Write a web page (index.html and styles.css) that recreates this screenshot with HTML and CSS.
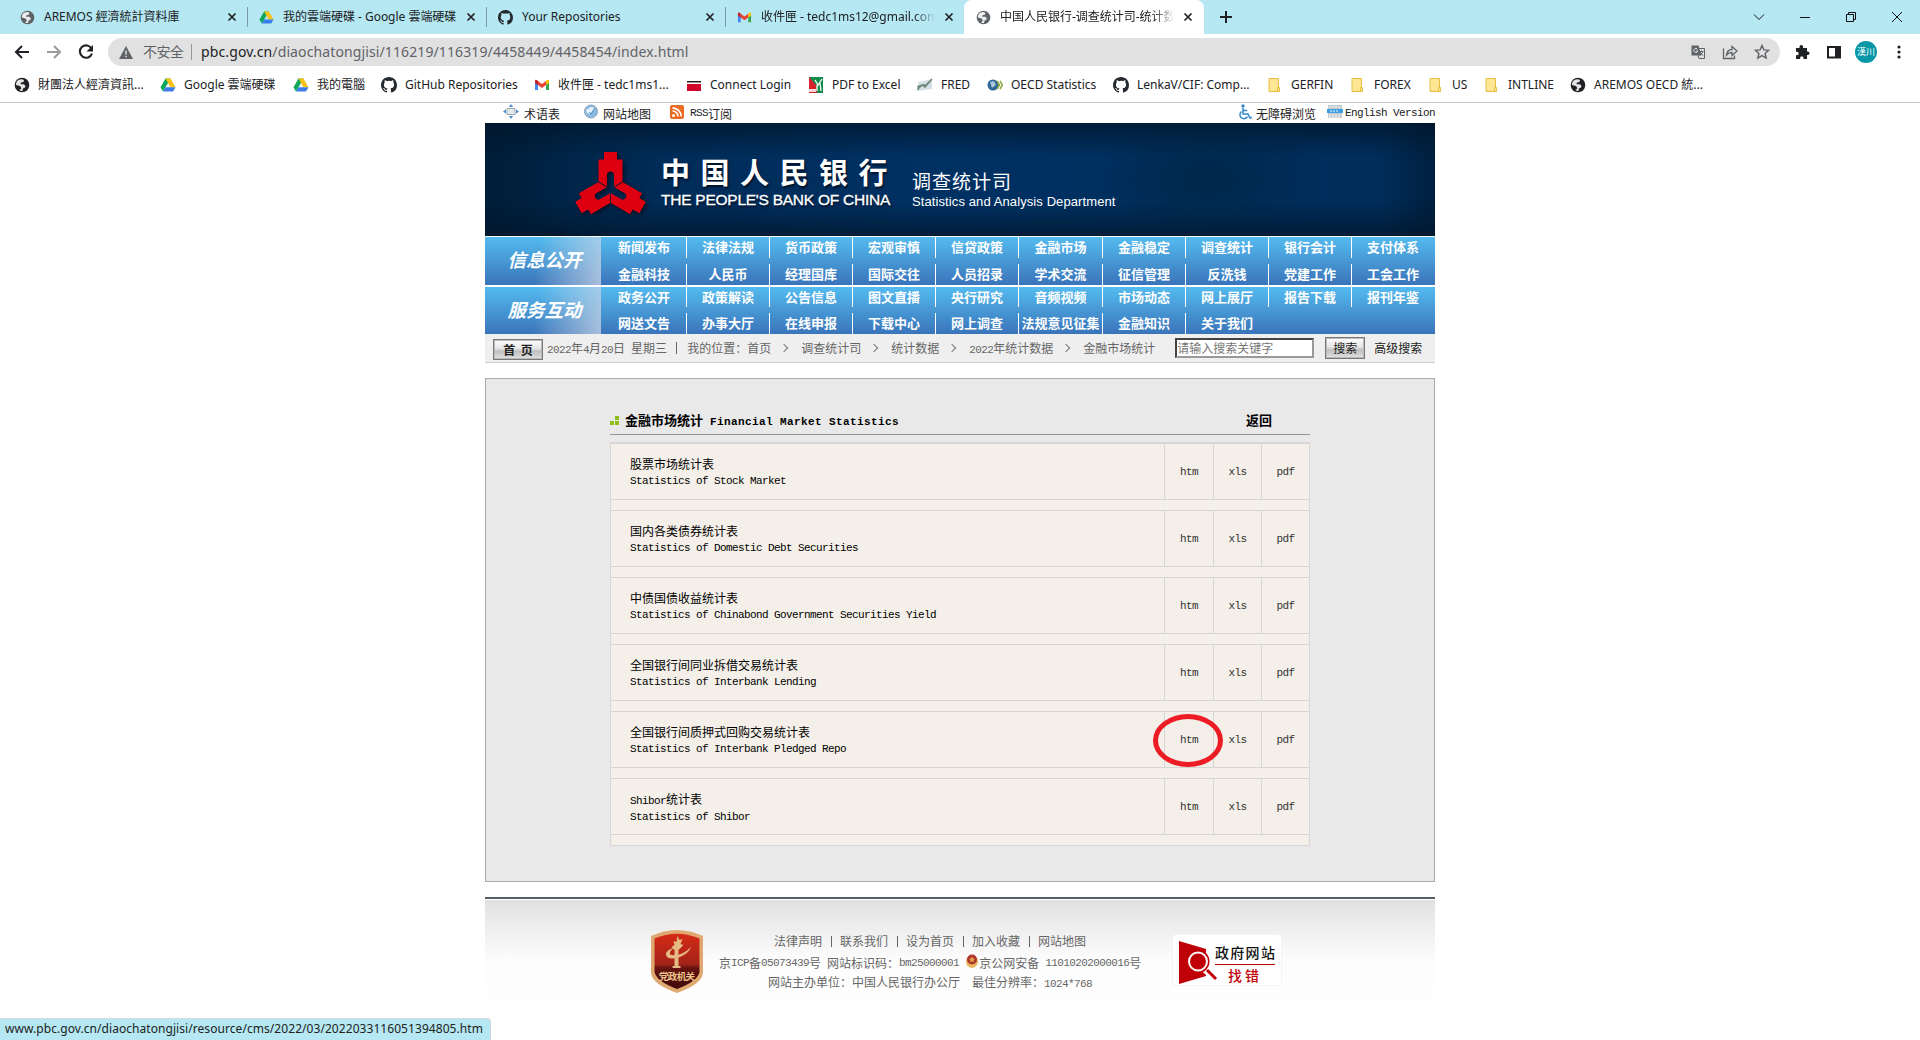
FILE: index.html
```html
<!DOCTYPE html>
<html lang="zh-CN">
<head>
<meta charset="utf-8">
<title>中国人民银行-调查统计司-统计数据</title>
<link rel="stylesheet" href="styles.css">
</head>
<body>
<svg class="defs" aria-hidden="true">
  <defs>
    <symbol id="globe" viewBox="0 0 16 16"><circle cx="8" cy="8" r="7.3" fill="currentColor"/><path d="M3 4.200C4 2.800 6 2 8 2.200L10 3 9.500 5 7 5.500 6.500 7.200H10L11.500 9 11 10.500 9 11.500 8.500 13.900C7.500 14.100 6.500 14 5.500 13L7.500 11.200 6 9 2 8C1.900 6.500 2.400 5.200 3 4.200Z" fill="#fff" opacity=".88"/></symbol>
    <symbol id="drive" viewBox="0 0 16 16"><path d="M5.500 1.500h5L8 5.900 3 14.500.5 10.200Z" fill="#0fa85a"/><path d="M5.500 1.500h5l5 8.700H10.400Z" fill="#fbc116"/><path d="M5.500 10.200h10L13 14.500H3Z" fill="#3b7ded"/></symbol>
    <symbol id="github" viewBox="0 0 16 16"><path fill="#24292f" d="M8 0C3.580 0 0 3.580 0 8c0 3.540 2.290 6.530 5.470 7.590.4.070.55-.17.55-.38 0-.19-.01-.82-.01-1.490-2.010.37-2.530-.49-2.690-.94-.09-.23-.48-.94-.82-1.130-.28-.15-.68-.52-.01-.53.63-.01 1.080.58 1.230.82.72 1.210 1.870.87 2.330.66.07-.52.28-.87.51-1.070-1.780-.2-3.640-.89-3.640-3.950 0-.87.31-1.590.82-2.150-.08-.2-.36-1.020.08-2.120 0 0 .67-.21 2.200.82A7.600 7.600 0 018 3.860c.68 0 1.360.09 2 .27 1.530-1.040 2.200-.82 2.200-.82.44 1.100.16 1.920.08 2.120.51.56.82 1.270.82 2.150 0 3.070-1.870 3.750-3.650 3.950.29.25.54.73.54 1.480 0 1.070-.01 1.930-.01 2.200 0 .21.15.46.55.38A8 8 0 0016 8c0-4.420-3.580-8-8-8z"/></symbol>
    <symbol id="gmail" viewBox="0 0 16 16"><path d="M1 5v8h3V7Z" fill="#4285f4"/><path d="M12 7v6h3V5Z" fill="#34a853"/><path d="M4 4l4 3 4-3v4l-4 3-4-3Z" fill="#ea4335"/><path d="M1 4c0-1.500 1.500-1.800 3 0v4L1 6Z" fill="#c5221f"/><path d="M15 4c0-1.500-1.500-1.800-3 0v4l3-2Z" fill="#fbbc04"/></symbol>
    <symbol id="folder" viewBox="0 0 16 16"><path d="M2 1.500h9.500v9h1v4H2Z" fill="#ffe694" stroke="#e6bd42"/><path d="M10.500 14v-3.500H12" fill="none" stroke="#e6bd42"/></symbol>
    <symbol id="close" viewBox="0 0 10 10"><path d="M1.500 1.500l7 7M8.500 1.500l-7 7" stroke="#202124" stroke-width="1.700"/></symbol>
  </defs>
</svg>

<header class="browser">
  <div class="tabs">
    <div class="tab"><svg class="fav grey"><use href="#globe"/></svg><span>AREMOS 經濟統計資料庫</span><svg class="x"><use href="#close"/></svg></div>
    <div class="tab"><svg class="fav"><use href="#drive"/></svg><span>我的雲端硬碟 - Google 雲端硬碟</span><svg class="x"><use href="#close"/></svg></div>
    <div class="tab"><svg class="fav"><use href="#github"/></svg><span>Your Repositories</span><svg class="x"><use href="#close"/></svg></div>
    <div class="tab last"><svg class="fav"><use href="#gmail"/></svg><span class="fade">收件匣 - tedc1ms12@gmail.com</span><svg class="x"><use href="#close"/></svg></div>
    <div class="tab active"><svg class="fav grey"><use href="#globe"/></svg><span class="fade sc">中国人民银行-调查统计司-统计数</span><svg class="x"><use href="#close"/></svg></div>
    <svg class="plus" viewBox="0 0 12 12"><path d="M6 0v12M0 6h12" stroke="#202124" stroke-width="2"/></svg>
    <div class="win">
      <svg viewBox="0 0 12 12"><path d="M1 3.500l5 5 5-5" /></svg>
      <svg viewBox="0 0 12 12"><path d="M1 6.500h10"/></svg>
      <svg viewBox="0 0 12 12"><path d="M1.500 3.500h7v7h-7zM3.500 3.500v-2h7v7h-2"/></svg>
      <svg viewBox="0 0 12 12"><path d="M1 1l10 10M11 1L1 11"/></svg>
    </div>
  </div>
  <div class="toolbar">
    <svg class="nav-i" viewBox="0 0 16 16"><path d="M15 8H2M8 2L2 8l6 6" fill="none" stroke="#202124" stroke-width="2"/></svg>
    <svg class="nav-i" viewBox="0 0 16 16"><path d="M1 8h13M8 2l6 6-6 6" fill="none" stroke="#9a9b9d" stroke-width="2"/></svg>
    <svg class="nav-i" viewBox="0 0 16 16"><path d="M13.500 4.500A6.200 6.200 0 1 0 14 9.500" fill="none" stroke="#202124" stroke-width="2.100"/><path d="M15 1v6.500H8.500Z" fill="#202124"/></svg>
    <div class="omni">
      <svg class="warn" viewBox="0 0 14 13"><path d="M7 0l7 13H0Z" fill="#5f6368"/><path d="M7 4.500v4M7 9.800v1.500" stroke="#e1e1e1" stroke-width="1.500"/></svg>
      <span class="unsafe">不安全</span>
      <span class="url"><b>pbc.gov.cn</b>/diaochatongjisi/116219/116319/4458449/4458454/index.html</span>
      <svg viewBox="0 0 16 16"><path d="M1.500 1.500h7l3 10h-10z" fill="#5f6368"/><path d="M8 4.500h6.500v10H9l-1-3" fill="none" stroke="#5f6368"/><path d="M9.500 7.500h4M11.500 6.500v1M10 11.500l3-4M10.500 8.500l2.500 3" stroke="#5f6368"/><path d="M7.500 5.300A2 2 0 1 0 7.800 7H6" fill="none" stroke="#e1e1e1"/></svg>
      <svg viewBox="0 0 16 16"><path d="M1.500 4.500v10h11v-3M4.500 11c.5-4 3-5.500 5.500-5.500V2.500l5 4.500-5 4.500v-3c-2.500 0-4 .5-5.500 2.500z" fill="none" stroke="#5f6368" stroke-width="1.300"/></svg>
      <svg viewBox="0 0 16 16"><path d="M8 1.500l1.900 4.400 4.800.4-3.600 3.100 1.100 4.700L8 11.600l-4.200 2.500 1.100-4.700L1.300 6.300l4.800-.4Z" fill="none" stroke="#5f6368" stroke-width="1.400"/></svg>
    </div>
    <div class="ext">
      <svg viewBox="0 0 16 16"><path d="M2 4h3.500V2.800a1.800 1.800 0 0 1 3.600 0V4H13v3.500h.8a1.800 1.800 0 0 1 0 3.600H13V15H9.500v-1a1.700 1.700 0 0 0-3.400 0v1H2v-3.800h1a1.700 1.700 0 0 0 0-3.400H2Z" fill="#202124"/></svg>
      <svg viewBox="0 0 16 16"><path d="M2 3h12v10.500H2z" fill="none" stroke="#202124" stroke-width="2"/><path d="M9 2h5v12H9z" fill="#202124"/></svg>
      <span class="avatar">漢川</span>
      <svg viewBox="0 0 16 16" fill="#202124"><circle cx="8" cy="3" r="1.600"/><circle cx="8" cy="8" r="1.600"/><circle cx="8" cy="13" r="1.600"/></svg>
    </div>
  </div>
  <nav class="marks">
    <a><svg class="dark"><use href="#globe"/></svg>財團法人經濟資訊...</a>
    <a><svg><use href="#drive"/></svg>Google 雲端硬碟</a>
    <a><svg><use href="#drive"/></svg>我的電腦</a>
    <a><svg><use href="#github"/></svg>GitHub Repositories</a>
    <a><svg><use href="#gmail"/></svg>收件匣 - tedc1ms1...</a>
    <a><svg viewBox="0 0 16 16"><path d="M1 4h14v1.500H1z" fill="#222"/><path d="M1 7h14v7H1z" fill="#d0062b"/></svg>Connect Login</a>
    <a><svg viewBox="0 0 16 16"><path d="M1 0h14v16H1z" fill="#128c4a"/><path d="M1 0l7 8 1 8H1z" fill="#d9222b"/><path d="M7 3l3 5 4-6M9 8v6M12 6l1 8" stroke="#fff" stroke-width="1.300" fill="none"/><path d="M1 12h7v3H1z" fill="#f4dada"/></svg>PDF to Excel</a>
    <a><svg viewBox="0 0 16 16"><path d="M1 5l14-3v10L1 14z" fill="#d6dfe5"/><path d="M0 13l5-5 3 2 7-8M0 10l5-2 4 0 5-5" stroke="#6c8774" stroke-width="1.500" fill="none"/></svg>FRED</a>
    <a><svg viewBox="0 0 16 16"><circle cx="6" cy="8" r="5.500" fill="#2d6693"/><path d="M3 5l4-1 2 4-4 3z" fill="#abc8dc"/><path d="M10 4l2.500 4L10 12M13 4l2.500 4L13 12" stroke="#8ba83d" stroke-width="1.500" fill="none"/></svg>OECD Statistics</a>
    <a><svg><use href="#github"/></svg>LenkaV/CIF: Comp...</a>
    <a><svg><use href="#folder"/></svg>GERFIN</a>
    <a><svg><use href="#folder"/></svg>FOREX</a>
    <a><svg><use href="#folder"/></svg>US</a>
    <a><svg><use href="#folder"/></svg>INTLINE</a>
    <a><svg class="dark"><use href="#globe"/></svg>AREMOS OECD 統...</a>
  </nav>
</header>

<main class="page">
  <div class="toplinks">
    <a><svg viewBox="0 0 16 16"><path d="M4 4.500h8v6H4z" fill="#e3e8ec" stroke="#9aa8b2"/><path d="M8 0l2.200 3H5.800zM8 15l2.200-3H5.800zM0 7.500l3-2.200v4.400zM16 7.500l-3-2.200v4.400z" fill="#5590cc"/></svg>术语表</a>
    <a><svg viewBox="0 0 16 16"><circle cx="8" cy="7.500" r="6.500" fill="#8abbe4" stroke="#8fa3b5"/><path d="M3 6l5-3 4 1-5 6-3-1z" fill="#e4f1fb"/><path d="M6 8l2 2 4-6" stroke="#568dbf" fill="none"/></svg>网站地图</a>
    <a><svg viewBox="0 0 16 16"><rect x="1" y="1" width="14" height="14" rx="2" fill="#ec6b20"/><circle cx="4.500" cy="11.500" r="1.500" fill="#fff"/><path d="M3.500 7a5.500 5.500 0 0 1 5.500 5.500M3.500 3.800a9 9 0 0 1 8.700 8.700" stroke="#fff" stroke-width="1.700" fill="none"/></svg><i>RSS</i>订阅</a>
    <a class="right"><svg viewBox="0 0 16 16"><circle cx="6" cy="2" r="1.700" fill="#3287c8"/><path d="M6 4v6h5l2 4 2-.6M6 6.500h4M4.500 7.500a4 4 0 1 0 6 5" stroke="#3287c8" stroke-width="1.500" fill="none"/></svg>无障碍浏览</a>
    <a><svg viewBox="0 0 16 16"><path d="M1 1h14v13H1z" fill="#c6cbcf"/><path d="M0 5h16v4H0z" fill="#3c9ee2"/><path d="M2 3h12M2 11h12M2 13h12M3 7h9" stroke="#f4f7fa" stroke-dasharray="2 1"/></svg><i>English Version</i></a>
  </div>

  <div class="banner">
    <svg class="logo" viewBox="0 0 71 63"><defs><path id="arm" d="M23.500 30.600V8.500H29V1H42V8.500H47.500V30.600L39 35.600V24a3.500 3.500 0 0 0-7 0V35.600Z"/></defs><g fill="#de0011"><use href="#arm"/><use href="#arm" transform="rotate(120 35.500 38)"/><use href="#arm" transform="rotate(240 35.500 38)"/></g></svg>
    <div class="name"><strong>中国人民银行</strong><span>THE PEOPLE'S BANK OF CHINA</span></div>
    <div class="dept"><strong>调查统计司</strong><span>Statistics and Analysis Department</span></div>
  </div>

  <nav class="menu">
    <h2>信息公开</h2>
    <div class="cells">
      <a>新闻发布</a><a>法律法规</a><a>货币政策</a><a>宏观审慎</a><a>信贷政策</a><a>金融市场</a><a>金融稳定</a><a>调查统计</a><a>银行会计</a><a>支付体系</a>
      <a>金融科技</a><a>人民币</a><a>经理国库</a><a>国际交往</a><a>人员招录</a><a>学术交流</a><a>征信管理</a><a>反洗钱</a><a>党建工作</a><a>工会工作</a>
    </div>
  </nav>
  <nav class="menu second">
    <h2>服务互动</h2>
    <div class="cells">
      <a>政务公开</a><a>政策解读</a><a>公告信息</a><a>图文直播</a><a>央行研究</a><a>音频视频</a><a>市场动态</a><a>网上展厅</a><a>报告下载</a><a>报刊年鉴</a>
      <a>网送文告</a><a>办事大厅</a><a>在线申报</a><a>下载中心</a><a>网上调查</a><a>法规意见征集</a><a>金融知识</a><a class="end">关于我们</a>
    </div>
  </nav>

  <div class="crumbs">
    <span class="btn home">首 页</span>
    <span class="date"><i>2022</i>年<i>4</i>月<i>20</i>日<i> </i>星期三</span><span class="bar"></span><span>我的位置：首页</span>
    <span class="gt"></span><span>调查统计司</span><span class="gt"></span><span>统计数据</span><span class="gt"></span><span><i>2022</i>年统计数据</span><span class="gt"></span><span>金融市场统计</span>
    <span class="field">请输入搜索关键字</span><span class="btn search">搜索</span><span class="adv">高级搜索</span>
  </div>

  <section class="panel">
    <div class="head"><svg viewBox="0 0 9 9"><path d="M5 0h4v4H5zM0 5h4v4H0zM5 5h4v4H5z" fill="#8fbe1b"/></svg><h1>金融市场统计<i> Financial Market Statistics</i></h1><a>返回</a></div>
    <div class="table">
      <div class="row"><p>股票市场统计表<br><i>Statistics of Stock Market</i></p><a>htm</a><a>xls</a><a>pdf</a></div>
      <div class="row"><p>国内各类债券统计表<br><i>Statistics of Domestic Debt Securities</i></p><a>htm</a><a>xls</a><a>pdf</a></div>
      <div class="row"><p>中债国债收益统计表<br><i>Statistics of Chinabond Government Securities Yield</i></p><a>htm</a><a>xls</a><a>pdf</a></div>
      <div class="row"><p>全国银行间同业拆借交易统计表<br><i>Statistics of Interbank Lending</i></p><a>htm</a><a>xls</a><a>pdf</a></div>
      <div class="row"><p>全国银行间质押式回购交易统计表<br><i>Statistics of Interbank Pledged Repo</i></p><a class="ringed">htm</a><a>xls</a><a>pdf</a></div>
      <div class="row"><p><i>Shibor</i>统计表<br><i>Statistics of Shibor</i></p><a>htm</a><a>xls</a><a>pdf</a></div>
    </div>
  </section>

  <footer class="foot">
    <svg class="emblem" viewBox="0 0 52 63">
      <defs><linearGradient id="red" x2="0" y2="1"><stop offset="0" stop-color="#d62a17"/><stop offset=".55" stop-color="#a32318"/><stop offset=".62" stop-color="#65130f"/><stop offset="1" stop-color="#3d0a08"/></linearGradient></defs>
      <path d="M0 6Q26-6 52 6V43Q51 54 26 63 1 54 0 43Z" fill="#dfa971"/>
      <path d="M3.500 8.500Q26-1 48.500 8.500V42Q47 51 26 59 5 51 3.500 42Z" fill="url(#red)"/>
      <path d="M23.500 36V20l-3-3 3-2-1-4 3 1 1-6 2 4 3-1-2 5 3 1-5 5v16h2v2h-8v-2Z" fill="#e6ba83"/><path d="M25 17q-11 3-10 8 2 6 14 2 9-4 11-10-6 6-13 8-9 1-8-2 0-3 6-6Z" fill="#e6ba83"/>
      <text x="26" y="49.500" text-anchor="middle" textLength="36">党政机关</text>
    </svg>
    <div class="info">
      <div class="links"><a>法律声明</a><a>联系我们</a><a>设为首页</a><a>加入收藏</a><a>网站地图</a></div>
      <div class="icp">京<i>ICP</i>备<i>05073439</i>号<i> </i>网站标识码：<i>bm25000001 </i><svg viewBox="0 0 12 14"><ellipse cx="6" cy="7.500" rx="6" ry="6.500" fill="#e8b860"/><circle cx="6" cy="5.500" r="5" fill="#ad352c"/><path d="M6 2.500l1 2 2 .3-1.500 1.500.3 2L6 7.300l-1.800 1 .3-2L3 4.800l2-.3z" fill="#e7a94e"/></svg>京公网安备<i> 11010202000016</i>号</div>
      <div class="host">网站主办单位：中国人民银行办公厅<i>&nbsp; </i>最佳分辨率：<i>1024*768</i></div>
    </div>
    <div class="report">
      <svg viewBox="0 0 40 44"><path d="M0 0l27 8v27L0 43Z" fill="#bf0006"/><path d="M25 27l5 5" stroke="#fff" stroke-width="7"/><circle cx="19" cy="20.500" r="11.500" fill="#bf0006"/><circle cx="19" cy="20.500" r="9" fill="none" stroke="#fff" stroke-width="2"/><path d="M28 29l9 9" stroke="#bf0006" stroke-width="3"/></svg>
      <div><b>政府网站</b><em>找错</em></div>
    </div>
  </footer>
</main>
<div class="status">www.pbc.gov.cn/diaochatongjisi/resource/cms/2022/03/2022033116051394805.htm</div>
</body>
</html>
```

FILE: styles.css
```css
*, *::before, *::after { box-sizing: border-box; }
body { margin: 0; height: 1040px; overflow: hidden; background: #fff; font: 12px/16px "Noto Sans CJK SC", sans-serif; color: #000; }
.defs { position: absolute; width: 0; height: 0; }
svg { flex: none; display: block; }
a, span { white-space: nowrap; }
i { font-family: "Liberation Mono", monospace; font-size: 11px; letter-spacing: -.6px; line-height: 1; font-style: normal; white-space: pre; }

/* browser window */
.browser { height: 103px; border-bottom: 1px solid #c9c9c9; font-family: "Noto Sans", "Noto Sans CJK TC", sans-serif; color: #202124; }
.tabs { display: flex; height: 34px; background: #b5e8f2; padding-left: 8px; align-items: center; }
.tab { position: relative; display: flex; align-items: center; width: 239px; height: 34px; padding-left: 12px; letter-spacing: -.02px; }
.tab:not(.last):not(.active)::after { content: ""; position: absolute; right: -1px; top: 7px; height: 20px; width: 1px; background: #799ba2; }
.tab .fav { width: 15px; height: 15px; margin-right: 9px; }
.tab span { width: 179px; overflow: hidden; }
.tab .x { width: 10px; height: 10px; margin-left: 4px; }
.grey { color: #5f6368; }
.dark { color: #202124; }
.tab .fade { width: 174px; margin-right: 5px; -webkit-mask-image: linear-gradient(90deg, #000 88%, transparent); mask-image: linear-gradient(90deg, #000 88%, transparent); }
.sc { font-family: "Noto Sans", "Noto Sans CJK SC", sans-serif; }
.tab.active { width: 240px; background: #fff; border-radius: 8px 8px 0 0; }
.plus { width: 12px; height: 12px; margin-left: 16px; }
.win { margin-left: auto; display: flex; gap: 34px; padding-right: 17px; height: 28px; align-items: center; }
.win svg { width: 12px; height: 12px; fill: none; stroke: #111; }
.toolbar { display: flex; align-items: center; height: 36px; padding-left: 14px; }
.nav-i { width: 16px; height: 16px; margin-right: 16px; }
.nav-i:nth-child(3) { margin-right: 14px; }
.omni { display: flex; align-items: center; height: 28px; width: 1672px; border-radius: 14px; background: #e1e1e1; padding: 0 10px 0 11px; color: #5f6368; }
.warn { width: 14px; height: 13px; margin-right: 10px; }
.unsafe { font-size: 14px; letter-spacing: -.6px; width: 49px; border-right: 1px solid #999; line-height: 16px; margin-right: 9px; }
.url { font-size: 14px; letter-spacing: .115px; flex: 1; }
.url b { color: #202124; font-weight: 400; }
.omni > svg:not(.warn) { width: 16px; height: 16px; margin-left: 16px; }
.ext { display: flex; align-items: center; margin-left: 14px; gap: 16px; }
.ext svg { width: 16px; height: 16px; }
.ext .avatar { width: 22px; height: 22px; margin: 0 -2px 0 -3px; border-radius: 50%; background: #0797a7; color: #fff; font-size: 9px; line-height: 22px; text-align: center; }
.marks { display: grid; grid-template-columns: 146px 133px 88px 153px 152px 122px 109px 70px 126px 154px 83px 78px 56px 86px 150px; padding-left: 14px; height: 29px; align-items: center; }
.marks a { display: flex; align-items: center; gap: 8px; }

/* site */
.page { width: 950px; margin: 0 auto; }
.toplinks { display: flex; height: 20px; padding-left: 18px; padding-top: 1px; color: #222; line-height: 22px; }
.toplinks a { display: flex; align-items: center; gap: 5px; margin-right: 22px; }
.toplinks a:nth-child(2) { margin-right: 18px; margin-left: 1px; gap: 4px; }
.toplinks a > i { margin-right: -5px; }
.marks svg, .toplinks svg { width: 16px; height: 16px; }
.toplinks svg { margin-top: -4px; }
.toplinks .right { margin-left: auto; margin-right: 11px; gap: 3px; }
.toplinks a:last-child { margin-right: 0; gap: 2px; }
.toplinks a:last-child i { margin-right: 0; }
.banner { height: 113px; display: flex; color: #fff; padding-left: 90px; padding-top: 28px; background: radial-gradient(ellipse 12% 60% at 76% 50%, rgba(0, 34, 60, .6), transparent), radial-gradient(ellipse 8% 55% at 12% 50%, rgba(0, 38, 75, .5), transparent), linear-gradient(180deg, rgba(0, 22, 43, .75), transparent 30%, transparent 70%, rgba(0, 22, 43, .75)), linear-gradient(90deg, #001d37, #002c58 18%, #003163 48%, #002d5a 94%, #001f3e); font-family: "Liberation Sans", "Noto Sans CJK SC", sans-serif; }
.logo { width: 71px; height: 63px; filter: drop-shadow(2px 2px 2px #001126); }
.name, .dept { display: flex; flex-direction: column; }
.name { width: 251px; margin-left: 15px; text-shadow: 1px 2px 2px #001126; }
.name strong { font-size: 29px; line-height: 34px; margin-top: 6px; letter-spacing: 10.500px; font-weight: 700; white-space: nowrap; }
.name span { font-size: 15.500px; line-height: 18px; letter-spacing: -.25px; -webkit-text-stroke: .3px #fff; }
.dept strong { font-size: 19px; line-height: 24px; margin-top: 20px; font-weight: 400; letter-spacing: 1px; }
.dept span { font-size: 13px; line-height: 14px; letter-spacing: .1px; }
.menu { display: flex; height: 48px; margin-top: 1px; background: linear-gradient(#54bbef, #3a74ba); color: #fff; }
.menu.second { height: 47px; margin-top: 2px; }
.menu h2 { width: 116px; margin: 0; padding-left: 3px; background: linear-gradient(100deg, transparent 45%, rgba(205, 215, 230, .75)); font: italic 700 18.500px/44px "Noto Sans CJK SC", sans-serif; text-align: center; }
.cells { flex: 1; display: grid; grid-template-columns: 86px 83px 83px 83px 83px 84px 83px 83px 83px 83px; grid-template-rows: 21px 21px; row-gap: 6px; }
.second .cells { grid-template-rows: 20px 21px; }
.cells a { border-right: 1px solid #fff; font-weight: 700; font-size: 13px; line-height: 20px; text-align: center; }
.cells a:nth-child(10n), .cells a.end { border-color: transparent; }
.cells a:nth-child(10n + 1) { padding-left: 1px; }
.crumbs { display: flex; align-items: center; height: 29px; padding-left: 8px; background: #efefef; border-bottom: 1px solid #ccc; color: #666; }
.btn { border: 1px solid #777; box-shadow: inset 0 0 0 1px #bbb; background: linear-gradient(#fdfdfd, #e5e5e5 45%, #bfbfbf 60%, #e2e2e2); text-align: center; color: #222; }
.home { width: 50px; height: 21px; line-height: 19px; margin: 2px 4px 0 0; font-weight: 700; word-spacing: 3px; }
.bar { width: 1px; height: 12px; background: #666; margin: 0 10px 0 9px; }
.gt { width: 30px; display: flex; justify-content: center; padding-right: 4px; }
.gt::before { content: ""; width: 6px; height: 6px; border: solid #777; border-width: 1px 1px 0 0; transform: rotate(45deg); }
.field { width: 139px; height: 20px; margin-left: 20px; background: #fff; border: 2px solid #999; border-top-color: #444; border-left-color: #444; line-height: 16px; color: #777; }
.search { width: 40px; height: 22px; line-height: 20px; margin: 0 9px 0 11px; }
.adv { color: #222; }
.panel { height: 504px; margin-top: 15px; padding: 32px 124px 0 124px; border: 1px solid #a2aaaf; background: #e9e9e9; }
.head { display: flex; align-items: center; height: 24px; padding-bottom: 5px; border-bottom: 1px solid #969696; }
.head svg { width: 9px; height: 9px; margin-right: 6px; }
.head h1, .head a { font-size: 13px; font-weight: 700; margin: 0; line-height: 18px; white-space: nowrap; }
.head h1 i { font-size: 11px; letter-spacing: .4px; }
.head a { margin-left: auto; margin-right: 38px; }
.table { margin-top: 7px; border: 1px solid #d6d6d6; background: #f4efe8; display: flex; flex-direction: column; gap: 10px; padding-bottom: 10px; }
.row { display: grid; grid-template-columns: 553px 49px 48px 1fr; height: 57px; border: solid #d6d6d6; border-width: 1px 0; }
.row p { margin: 0; padding: 12px 0 0 19px; line-height: 15px; }
.row a { position: relative; border-left: 1px solid #d6d6d6; display: flex; align-items: center; justify-content: center; font: 11px "Liberation Mono", monospace; letter-spacing: -.6px; color: #333; }
.ringed::after { content: ""; position: absolute; left: -12px; top: 2px; width: 70px; height: 53px; border: 5px solid #ed1c24; border-radius: 50%; z-index: 1; }
.foot { display: flex; margin-top: 15px; height: 140px; border-top: 2px solid #52606a; background: linear-gradient(#fff 1px, #e1e1e1 1px, #fdfdfd 62px, #fff); color: #666; padding-left: 166px; }
.emblem { width: 52px; height: 63px; margin-top: 31px; }
.emblem text { font: 700 9.500px "Noto Sans CJK SC", sans-serif; fill: #efc58e; }
.info { width: 454px; margin-left: 16px; padding-top: 34px; }
.links { display: flex; padding-left: 55px; height: 18px; }
.links a + a { margin-left: 9px; padding-left: 9px; background: linear-gradient(#666, #666) 0 3px / 1px 11px no-repeat; }
.icp { display: flex; align-items: center; height: 24px; }
.icp svg { width: 12px; height: 14px; margin: -5px 1px 0 1px; }
.host { padding-left: 49px; line-height: 13px; white-space: nowrap; }
.report { width: 110px; height: 52px; margin-left: -1px; margin-top: 35px; padding: 6px 0 0 6px; border: 1px solid #f3f3f3; border-radius: 4px; background: #fff; display: flex; }
.report svg { width: 40px; height: 44px; }
.report div { margin-left: -4px; width: 60px; text-align: center; }
.report b { display: block; color: #111; font-size: 14px; font-weight: 500; letter-spacing: 1.3px; line-height: 15px; padding-top: 4px; height: 24px; border-bottom: 1px solid #bf0006; white-space: nowrap; }
.report em { display: block; color: #bf0006; font-style: normal; font-size: 14px; font-weight: 500; letter-spacing: 3px; line-height: 20px; }
.status { position: fixed; left: 0; bottom: 0; width: 491px; height: 22px; padding-left: 5px; background: #b5e8f2; border: solid #d5d8da; border-width: 1px 1px 0 0; border-radius: 0 4px 0 0; font: 12px/20px "Noto Sans", sans-serif; letter-spacing: .06px; color: #222; }
```
